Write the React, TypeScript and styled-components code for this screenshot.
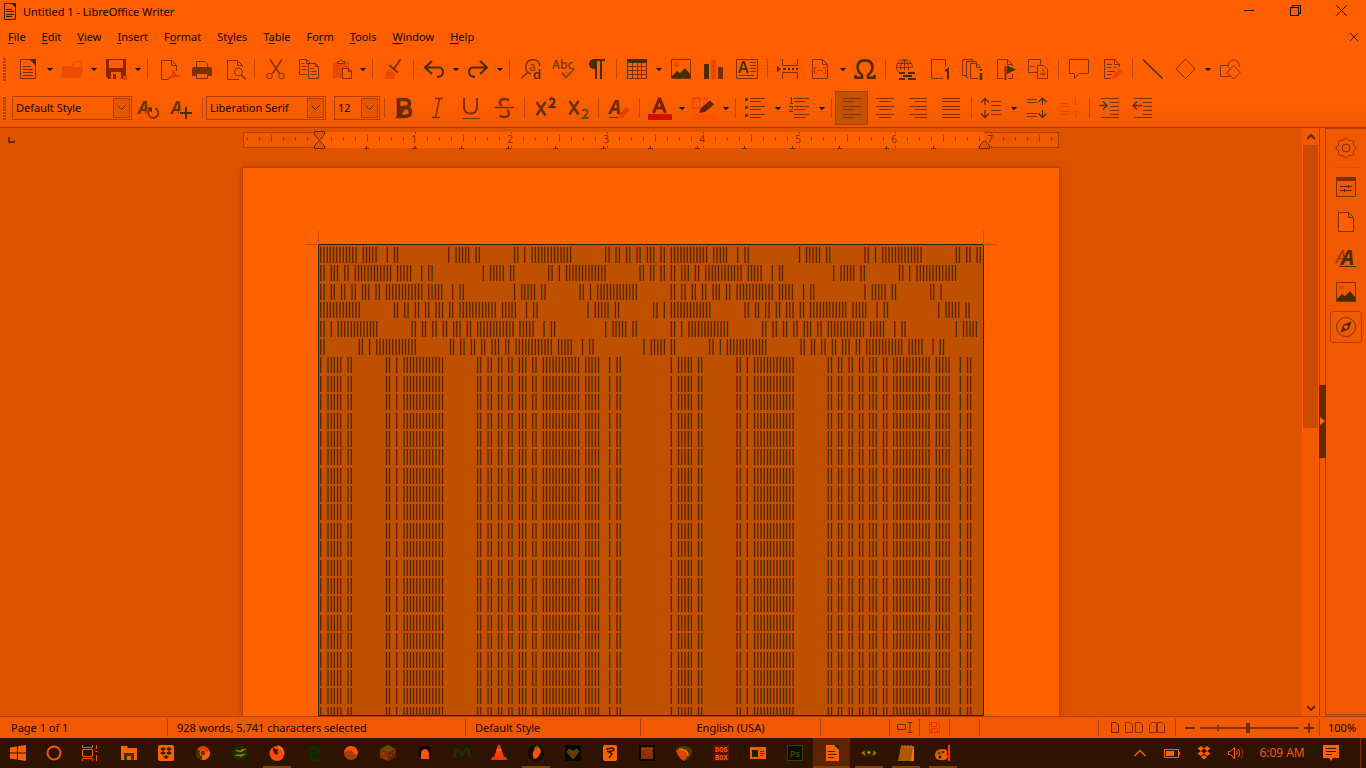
import React from "react";
import styled, { createGlobalStyle, css } from "styled-components";

const c = {
  page: "#ff6000",
  chrome: "#ff5f00",
  panel: "#f05900",
  desk: "#de5200",
  rule: "#ab4000",
  line: "#7b3200",
  dark: "#4a2c00",
  red: "#ea4700",
  task: "#2e1300",
};

const Global = createGlobalStyle`
  * { box-sizing: border-box; }
  body { margin: 0; background: ${c.task}; }
  button, select, input { font: inherit; color: inherit; margin: 0; padding: 0; border: 0; background: none; border-radius: 0; }
  button { cursor: pointer; }
  svg { display: block; flex: none; }
`;

const Shell = styled.div`
  display: flex;
  flex-direction: column;
  height: 100vh;
  overflow: hidden;
  color: #100600;
  font: 11px/16px "Noto Sans", "Open Sans", sans-serif;
`;

const Header = styled.header`
  flex: none;
  background: linear-gradient(${c.chrome} 75%, #f25a00);
  border-bottom: 1px solid ${c.rule};
`;

const TitleBar = styled.div`
  display: flex;
  align-items: center;
  height: 24px;
  padding-left: 3px;
  gap: 6px;
`;
const Title = styled.h1`
  margin: 0;
  flex: 1;
  font-size: 11px;
  font-weight: 400;
  line-height: 16px;
`;
const WindowButtons = styled.div`
  display: flex;
  align-self: flex-start;
  padding-right: 2px;
`;
const WindowButton = styled.button`
  width: 46px;
  height: 20px;
  display: grid;
  place-items: center;
`;

const MenuBar = styled.nav`
  display: flex;
  align-items: center;
  height: 26px;
`;
const MenuItem = styled.button`
  padding: 0 8px;
  line-height: 16px;
  u { text-underline-offset: 2px; }
`;
const CloseDoc = styled.button`
  margin-left: auto;
  width: 24px;
  height: 22px;
  display: grid;
  place-items: center;
`;

const Toolbar = styled.div<{ $second?: boolean }>`
  display: flex;
  align-items: center;
  height: ${(p) => (p.$second ? 39 : 38)}px;
  padding-top: ${(p) => (p.$second ? 1 : 0)}px;
  padding-left: 3px;
`;
const Grip = styled.div<{ $gap: number }>`
  flex: none;
  width: 3px;
  height: 23px;
  margin-right: ${(p) => p.$gap}px;
  background: repeating-linear-gradient(#a84200 0 2px, transparent 2px 3px);
`;
const Tool = styled.button<{ $on?: boolean }>`
  flex: none;
  width: 33px;
  height: 34px;
  padding: 0 4px 0 5px;
  display: flex;
  align-items: center;
  ${(p) =>
    p.$on &&
    css`
      background: #c45200;
      box-shadow: inset 0 0 0 1px #a04200;
    `}
`;
const Drop = styled.button`
  flex: none;
  width: 11px;
  height: 34px;
  display: grid;
  place-items: center;
  &::after {
    content: "";
    border: 3px solid transparent;
    border-top-color: #000;
    border-bottom: 0;
  }
`;
const Sep = styled.div`
  flex: none;
  width: 8px;
  height: 20px;
  background: linear-gradient(#bd4800, #bd4800) 4px 0 / 1px 100% no-repeat;
`;
const Combo = styled.label<{ $w: number; $gap?: number }>`
  flex: none;
  display: grid;
  width: ${(p) => p.$w}px;
  height: 24px;
  margin-right: ${(p) => p.$gap || 0}px;
  border: 1px solid ${c.rule};
  select {
    grid-area: 1 / 1;
    appearance: none;
    width: 100%;
    padding-left: 3px;
    outline: none;
  }
`;
const ComboArrow = styled.span`
  grid-area: 1 / 1;
  justify-self: end;
  align-self: center;
  width: 17px;
  height: 20px;
  margin-right: 1px;
  border: 1px solid ${c.rule};
  background: #e65500;
  display: grid;
  place-items: center;
  pointer-events: none;
`;

const Body = styled.main`
  flex: 1;
  min-height: 0;
  display: flex;
  background: ${c.desk};
`;
const Desk = styled.section`
  flex: 1;
  min-width: 0;
  display: flex;
  flex-direction: column;
  align-items: center;
  position: relative;
  overflow: hidden;
  padding-top: 3px;
`;
const TabKind = styled.button`
  position: absolute;
  left: 8px;
  top: 9px;
  width: 7px;
  height: 6px;
  border-left: 2px solid #6b2a00;
  border-bottom: 2px solid #6b2a00;
`;
const Page = styled.article`
  flex: 1;
  min-height: 0;
  display: flex;
  width: 818px;
  margin-top: 17px;
  padding: 76px 75px 0;
  background: ${c.page};
  border: 1px solid #b84500;
  border-bottom: 0;
  box-shadow: 0 0 5px #b04000;
`;
const TextArea = styled.div`
  position: relative;
  flex: 1;
  border: 1px solid #1c2c00;
  background: #be5000;
`;
const TextClip = styled.div`
  height: 100%;
  overflow: hidden;
`;
const BodyText = styled.p`
  margin: 0;
  color: #1c0800;
  font-family: "Liberation Serif", serif;
  font-size: 16px;
  line-height: 1.15;
  white-space: pre-wrap;
`;
const Crop = styled.i<{ $right?: boolean }>`
  position: absolute;
  top: -14px;
  width: 14px;
  height: 14px;
  border-bottom: 1px solid #c84b00;
  ${(p) =>
    p.$right
      ? css`
          right: -14px;
          border-left: 1px solid #c84b00;
        `
      : css`
          left: -14px;
          border-right: 1px solid #c84b00;
        `}
`;

const ScrollBar = styled.div`
  flex: none;
  width: 17px;
  display: flex;
  flex-direction: column;
  background: ${c.panel};
  border-left: 1px solid ${c.chrome};
  border-right: 1px solid ${c.chrome};
`;
const ScrollButton = styled.button`
  height: 17px;
  display: grid;
  place-items: center;
`;
const ScrollTrack = styled.div`
  flex: 1;
`;
const ScrollThumb = styled.div`
  height: 51%;
  background: #ca4a00;
`;
const Splitter = styled.div`
  flex: none;
  width: 7px;
  display: flex;
  align-items: center;
  padding-bottom: 2px;
  border: 1px solid ${c.rule};
  border-width: 0 1px;
  background: ${c.panel};
`;
const SplitHandle = styled.button`
  flex: none;
  width: 7px;
  height: 73px;
  margin-left: -1px;
  background: #682700;
  display: grid;
  place-items: center;
`;
const SideBar = styled.aside`
  flex: none;
  width: 40px;
  margin-bottom: 1px;
  padding-top: 3px;
  display: flex;
  flex-direction: column;
  align-items: center;
  background: ${c.panel};
  border: 1px solid ${c.rule};
  border-width: 1px 0;
`;
const SideButton = styled.button<{ $on?: boolean }>`
  width: 32px;
  height: 32px;
  margin-bottom: 3px;
  display: grid;
  place-items: center;
  border-radius: 3px;
  ${(p) => p.$on && css`border: 1px solid ${c.rule};`}
`;
const SideRule = styled.hr`
  width: 24px;
  height: 1px;
  margin: 0 0 3px;
  border: 0;
  background: #d95000;
`;

const StatusBar = styled.footer`
  flex: none;
  display: flex;
  align-items: center;
  height: 22px;
  background: ${c.panel};
  border-top: 1px solid ${c.rule};
`;
const Cell = styled.div<{ $w?: number; $pad?: number; $center?: boolean }>`
  flex: ${(p) => (p.$w ? "none" : 1)};
  width: ${(p) => (p.$w ? p.$w + "px" : "auto")};
  height: 17px;
  display: flex;
  align-items: center;
  gap: 4px;
  padding-left: ${(p) => p.$pad || 0}px;
  justify-content: ${(p) => (p.$center ? "center" : "flex-start")};
  border-right: 1px solid ${c.rule};
  white-space: nowrap;
  &:last-child { border-right: 0; }
`;
const ZoomSlider = styled.input`
  appearance: none;
  width: 99px;
  height: 16px;
  background:
    linear-gradient(#823400, #823400) 17px 50% / 2px 6px no-repeat,
    linear-gradient(#823400, #823400) 0 50% / 100% 2px no-repeat;
  &::-webkit-slider-thumb {
    appearance: none;
    width: 4px;
    height: 10px;
    background: #6b2a00;
  }
`;
const ZoomButton = styled.button`
  width: 12px;
  height: 16px;
  display: grid;
  place-items: center;
`;

const TaskBar = styled.nav`
  flex: none;
  display: flex;
  height: 30px;
  background: ${c.task};
  color: ${c.chrome};
`;
const TaskButton = styled.button<{ $w?: number; $open?: boolean; $active?: boolean }>`
  flex: none;
  width: ${(p) => p.$w || 37}px;
  height: 30px;
  display: grid;
  place-items: center;
  background:
    linear-gradient(#7e4000, #7e4000) 50% 100% / ${(p) => (p.$active ? 37 : p.$open ? 28 : 0)}px 2px no-repeat,
    ${(p) => (p.$active ? "#5c2400" : "transparent")};
`;
const TaskGap = styled.div`
  flex: none;
  width: 2px;
`;
const Tray = styled.div`
  margin-left: auto;
  display: flex;
  align-items: center;
  padding-right: 5px;
`;
const Clock = styled.time`
  width: 60px;
  text-align: center;
  font-size: 12px;
  font-family: "Open Sans", sans-serif;
  white-space: nowrap;
`;
const ShowDesktop = styled.button`
  width: 1px;
  height: 30px;
  margin-left: 10px;
  background: #7a3200;
`;

const Ico = ({ children, s = c.line, w = 1, crisp = false, size = 24 }: any) => (
  <svg
    width={size}
    height={size}
    viewBox={`0 0 ${size} ${size}`}
    fill="none"
    stroke={s}
    strokeWidth={w}
    shapeRendering={crisp ? "crispEdges" : "auto"}
    aria-hidden="true"
  >
    {children}
  </svg>
);

const Glyph = ({ x, y, size, children, fill = c.line, weight = 700, italic = false, family = "Open Sans" }: any) => (
  <text
    x={x}
    y={y}
    fontSize={size}
    fontFamily={`"${family}", sans-serif`}
    fontWeight={weight}
    fontStyle={italic ? "italic" : "normal"}
    fill={fill}
    stroke="none"
  >
    {children}
  </text>
);

const pageShape = (x: number) => `M${x}.5 2.5H${x + 10}.5L${x + 15}.5 7.5V21.5H${x}.5ZM${x + 10}.5 2.5V7.5H${x + 15}.5`;

const DocIcon = () => (
  <>
    <path d="M4.5 2.5H15L19.5 7V21.5H4.5Z" />
    <path d="M13 2H20V9Z" fill={c.dark} stroke="none" />
    <path d="M7 9.5H15M7 12.5H17M7 15.5H17M7 18.5H17" />
  </>
);
const PictureIcon = () => (
  <>
    <path d="M2.5 2.5H21.5V21.5H2.5Z" />
    <circle cx="7.5" cy="7.5" r="2.5" fill={c.red} stroke="none" />
    <path d="M3 21V19L8 14L11 16L16 11L21 17V21Z" fill={c.dark} stroke="none" />
  </>
);

const icons: Record<string, React.ReactNode> = {
  New: <Ico><DocIcon /></Ico>,
  Open: (
    <Ico s="#e04c00">
      <path d="M2.5 19V9.5H12L14.5 4.5H21.5V9" />
      <path d="M1 21L3 10H23L21 21Z" fill="#ea4c00" stroke="none" />
    </Ico>
  ),
  Save: (
    <Ico s="none" crisp>
      <path d="M2 2H22V22H4L2 20Z" fill="#8c2600" />
      <path d="M5 3H19V11H5Z" fill={c.chrome} />
      <path d="M7 15H17V22H7Z" fill={c.chrome} />
      <path d="M9 17H12V22H9Z" fill="#8c2600" />
      <circle cx="21" cy="21" r="2.5" fill="#f04000" />
    </Ico>
  ),
  "Export as PDF": (
    <Ico>
      <path d="M13 22.5H5.5V3.5H15.5L20.5 8.5V14M15.5 3.5V8.5H20.5" />
      <path d="M12 22C15 20 17.5 17 17.5 13.5C18 17 20 19.5 24 19.5C20 18.5 15.5 19.5 12 22Z" stroke="#e83000" strokeWidth="1.5" />
    </Ico>
  ),
  Print: (
    <Ico s="none">
      <path d="M3 12Q3 10 5 10H21Q23 10 23 12V19H19V16H7V19H3Z" fill={c.line} />
      <path d="M7.5 10V4.5H16L18.5 7V10" stroke={c.line} />
      <path d="M7.5 16.5H18.5V21.5H7.5Z" stroke={c.line} />
    </Ico>
  ),
  "Print Preview": (
    <Ico>
      <path d="M20.5 10V8.5L15.5 3.5H5.5V22.5H17M15.5 3.5V8.5H20.5" />
      <circle cx="16.5" cy="15" r="4" />
      <path d="M19.5 18L24 22.5" strokeWidth="1.5" />
    </Ico>
  ),
  Cut: (
    <Ico>
      <path d="M7 2.5L16.5 16.5M19 2.5L9.500 16.5" strokeWidth="1.5" />
      <circle cx="6.5" cy="19" r="2.800" />
      <circle cx="18.5" cy="19" r="2.800" />
    </Ico>
  ),
  Copy: (
    <Ico>
      <path d="M11 17.5H3.5V2.5H10.5L14.5 6.5M10.5 2.5V6.5H14.5" />
      <path d="M12.5 6.5H19.5L22.5 9.5V21.5H12.5ZM19.5 6.5V9.5H22.5M5.5 6.5H8.5M5.5 9.5H10.5M5.5 12.5H10.5M14.5 11.5H18M14.5 14.5H20.5M14.5 17.5H20.5" />
    </Ico>
  ),
  Paste: (
    <Ico>
      <path d="M4 5H20V21H4Z" fill={c.red} stroke="none" />
      <path d="M8.5 6.5V4.5H10.5Q12 1 13.5 4.5H15.5V6.5Z" stroke={c.line} fill={c.chrome} />
      <path d="M13.5 11.5H19.5L22.5 14.5V21.5H13.5ZM19.5 11.5V14.5H22.5" fill={c.chrome} />
    </Ico>
  ),
  "Clone Formatting": (
    <Ico>
      <path d="M4 22L5 15Q7 12.5 8.5 12.5L15 17L13 22Z" fill={c.red} stroke="none" />
      <path d="M8 8L17 15.5M19.5 2.5L13 11.5" strokeWidth="2" />
    </Ico>
  ),
  Undo: <Ico s={c.dark} w={2}><path d="M10 4L3 10.5L10 17M3 10.5H16.5Q21 10.5 21 15Q21 19.5 15 20" /></Ico>,
  Redo: <Ico s={c.dark} w={2}><path d="M14 4L21 10.5L14 17M21 10.5H7.5Q3 10.5 3 15Q3 19.5 9 20" /></Ico>,
  "Find and Replace": (
    <Ico w={1.5}>
      <path d="M3 21.5L9.500 15.500M13 17Q7.500 15.500 7.700 9.500Q8.500 2.800 15 2.500Q21.500 3 21.800 9" />
      <Glyph x={11} y={14} size={12} weight={400}>a</Glyph>
      <Glyph x={15} y={22} size={13} weight={600} fill={c.dark}>d</Glyph>
    </Ico>
  ),
  Spelling: (
    <Ico>
      <Glyph x={1} y={12} size={12} weight={600}>Abc</Glyph>
      <path d="M11 16L15 20.5L23.5 11.5" stroke="#8a4a00" strokeWidth="2" />
    </Ico>
  ),
  "Formatting Marks": (
    <Ico s="none" crisp>
      <path d="M11 12Q5 12 5 7Q5 2 11 2H21V4H18V22H16V4H13V22H11Z" fill={c.dark} />
    </Ico>
  ),
  "Insert Table": (
    <Ico crisp>
      <path d="M2 2H22V6H2Z" fill={c.dark} stroke="none" />
      <path d="M2.5 4V21.5H21.5V4M2 9.5H22M2 13.5H22M2 17.5H22M7.5 6V22M12.5 6V22M16.5 6V22" />
    </Ico>
  ),
  "Insert Image": <Ico><PictureIcon /></Ico>,
  "Insert Chart": (
    <Ico s="none" crisp>
      <path d="M2 7H7V22H2Z" fill={c.dark} />
      <path d="M9 3H14V22H9Z" fill={c.red} />
      <path d="M16 10H21V22H16Z" fill="#7a2e00" />
    </Ico>
  ),
  "Insert Text Box": (
    <Ico>
      <path d="M1.5 2.5H22.5V21.5H1.5ZM15 5.5H21M15 8.5H21M15 11.5H21M15 14.5H21M4 18.5H19" />
      <Glyph x={3} y={16} size={16} weight={600} fill={c.dark}>A</Glyph>
    </Ico>
  ),
  "Page Break": (
    <Ico>
      <path d="M6.5 2V8.5H21.5V2M6.5 22V15.5H21.5V22" />
      <path d="M1 9L5 12L1 15ZM7 11H10V13H7ZM12 11H14V13H12ZM16 11H18V13H16ZM20 11H22V13H20Z" fill={c.dark} stroke="none" />
    </Ico>
  ),
  "Insert Field": (
    <Ico>
      <path d={pageShape(3)} />
      <path d="M8 10.5H5.5V16.5H8M14 10.5H16.5V16.5H14M8 13.500H14" stroke="#d82800" />
    </Ico>
  ),
  "Special Character": (
    <Ico s={c.dark} w={2.5}>
      <path d="M2.500 18V20.800H9V18Q4.500 14.500 4.500 10Q4.800 3.500 12 3.300Q19.200 3.500 19.500 10Q19.500 14.500 15 18V20.800H21.500V18" />
    </Ico>
  ),
  Hyperlink: (
    <Ico>
      <path d="M2.500 10.500A8 8 0 0 1 18.500 10.500M2.500 10.500Q2.500 13 4.500 15M2.500 10.500H18.500M4 6.500H17M10.500 2.500V13M10.500 2.500Q6 6 6.500 13M10.500 2.500Q15 6 14.500 13" />
      <path d="M5 16H11M14 16H21M9 19H18M5 22H11M14 22H22" stroke={c.dark} strokeWidth="2" />
    </Ico>
  ),
  Footnote: (
    <Ico>
      <path d="M16 21.5H4.5V2.5H18.5V10" />
      <path d="M18 14L21 12V22.5" stroke={c.dark} strokeWidth="2" />
    </Ico>
  ),
  Endnote: (
    <Ico>
      <path d="M6 18.5H2.5V2.5H12.5V4M8 20.5H6.5V4.5H16.5V6M18 21.5H10.5V6.5H16.5L20.5 10V11M16.5 6.5V10.5H20" />
      <path d="M21 12V14M21 16V23" stroke={c.dark} strokeWidth="2.5" />
    </Ico>
  ),
  Bookmark: (
    <Ico>
      <path d="M10 21.5H4.5V2.5H14.5L19.5 7.5V9M14.5 2.5V7.5H19.5M15 21.5H19.5V17" />
      <path d="M12.5 9V23" strokeWidth="2" />
      <path d="M14 8.500L23 12.500L14 17Z" fill={c.dark} stroke="none" />
    </Ico>
  ),
  "Cross-reference": (
    <Ico>
      <path d="M11 15.5H2.5V2.5H14.5V8M11.5 21.5V8.5H17.5L21.5 12V21.5ZM17 12V18M14.5 16L17 18.5L19.5 16" />
      <path d="M4 9.5H9M14 17.5H15" stroke="#d02c00" />
    </Ico>
  ),
  Comment: <Ico><path d="M2.5 2.5H21.5V16.5H12L7.5 21.5V16.5H2.5Z" /></Ico>,
  "Track Changes": (
    <Ico>
      <path d="M11 21.5H4.5V2.5H14.5L19.5 7.5V10M14.5 2.5V7.5H19.5M7 7.500H12M7 10.5H11M7 14.500H15M7 17.5H12" />
      <path d="M13 10.5H17" stroke="#d02c00" />
      <path d="M12 22L13 18L20 11L23 14L16 21Z" fill={c.red} stroke="none" />
    </Ico>
  ),
  Line: <Ico s={c.dark} w={1.5}><path d="M2 2.5L21.5 21.5" /></Ico>,
  "Basic Shapes": <Ico><path d="M11.5 2L21 12L11.5 21.5L2 12Z" /></Ico>,
  "Draw Functions": (
    <Ico>
      <path d="M10 8.5H2.5V19.5H12" />
      <path d="M11 11A5.500 5.500 0 1 1 21 10" />
      <path d="M15.500 8.500L22 15.500L15.500 22L9 15.500Z" />
    </Ico>
  ),
  "Update Style": (
    <Ico>
      <Glyph x={1} y={18} size={17} italic fill="#6b3000">A</Glyph>
      <circle cx="16" cy="17" r="6.800" fill={c.chrome} stroke="none" />
      <path d="M18 12.300A5 5 0 1 1 13 13.200" strokeWidth="1.800" stroke={c.line} />
      <path d="M10 11.500H15V16.500Z" fill={c.dark} stroke="none" />
    </Ico>
  ),
  "New Style": (
    <Ico>
      <Glyph x={1} y={18} size={17} italic fill="#6b3000">A</Glyph>
      <path d="M16 10V24M9 17H23" stroke={c.chrome} strokeWidth="4" />
      <path d="M16 11V23M10 17H22" stroke={c.dark} strokeWidth="2" />
    </Ico>
  ),
  Bold: <Ico s="#6b2a00" w={3.500}><path d="M5.500 3.500H11Q16.500 3.500 16.500 7.500Q16.500 11.500 11 11.500H6.500M11 11.500Q17.500 11.500 17.500 16Q17.500 20.500 11 20.500H5.500ZM5.500 2V22" /></Ico>,
  Italic: <Ico w={1.500}><path d="M9 2.500H17M6 21.500H14M13.500 2.500L9.500 21.500" /></Ico>,
  Underline: <Ico s="#7b2e00" w={2}><path d="M5 2V11Q5 17.500 11.500 17.500Q18 17.500 18 11V2" /><path d="M3 22.500H21" strokeWidth="1" /></Ico>,
  Strikethrough: (
    <Ico s="#7b2e00">
      <path d="M17 4.500Q15.500 3 12.500 3Q8 3 8 6.500Q8 9 10 10M7.500 19.500Q9.500 21 12 21Q17 21 17 17.500Q17 15 15 14" strokeWidth="2.500" />
      <path d="M2.500 11.500H22" strokeWidth="1.500" />
    </Ico>
  ),
  Superscript: (
    <Ico s="#6b3000" w={2.5}>
      <path d="M3.5 6L12.5 19.5M12.5 6L3.5 19.5" />
      <path d="M16.5 4Q17.5 2.5 19 2.5Q21.5 2.5 21.5 5Q21.5 7 17 11H22.500" stroke={c.dark} strokeWidth="2" />
    </Ico>
  ),
  Subscript: (
    <Ico s="#6b3000" w={2.5}>
      <path d="M3.5 5L12.5 18.5M12.5 5L3.5 18.5" />
      <path d="M16.5 15Q17.5 13.5 19 13.5Q21.5 13.5 21.5 16Q21.5 18 17 22H22.500" stroke="#6b4a00" strokeWidth="2" />
    </Ico>
  ),
  "Clear Formatting": (
    <Ico>
      <Glyph x={2} y={18} size={19} italic fill="#6b2a00">A</Glyph>
      <path d="M2 21.5H11" />
      <path d="M11 20L19 11L23 14L15 23Z" fill="#f03c00" stroke="none" />
    </Ico>
  ),
  "Font Color": (
    <Ico>
      <path d="M5.5 17L11.2 3H11.8L17.5 17M8 12H15" stroke="#7b2000" strokeWidth="3" />
      <path d="M0 18H24V24H0Z" fill="#d41000" stroke="none" />
    </Ico>
  ),
  Highlighting: (
    <Ico>
      <path d="M0 1H16V13H0Z" fill="#f04c00" stroke="none" />
      <Glyph x={1} y={11} size={12} weight={600} fill="#ff6a10">ab</Glyph>
      <path d="M7 17L9 12L18 4.500L22 8.500L13 16Z" fill="#6b2200" stroke="none" />
      <path d="M0 18H24V24H0Z" fill="#ff5200" stroke="none" />
    </Ico>
  ),
  Bullets: (
    <Ico crisp>
      <path d="M6 2.5H21M6 5.5H17M6 10.5H21M6 13.5H17M6 18.5H21M6 21.5H17" />
      <path d="M1 2H4V5H1ZM1 10H4V13H1ZM1 18H4V21H1Z" fill="#554000" stroke="none" />
    </Ico>
  ),
  Numbering: (
    <Ico crisp>
      <path d="M6 2.5H21M6 5.5H17M6 10.5H21M6 13.5H17M6 18.5H21M6 21.5H17" />
      <path d="M2 3L3.5 2V8M1.5 7.5H5M1.5 11Q4.5 9 4.5 12L2 15.5H5" stroke="#5c3800" />
    </Ico>
  ),
  "Align Left": <Ico crisp><path d="M3 2.5H21M3 5.5H15M3 10.5H21M3 13.5H15M3 18.5H21M3 21.5H15" /></Ico>,
  "Align Center": <Ico crisp><path d="M3 2.5H21M6 5.5H18M3 10.5H21M6 13.5H18M3 18.5H21M6 21.5H18" /></Ico>,
  "Align Right": <Ico crisp><path d="M3 2.5H21M9 5.5H21M3 10.5H21M9 13.5H21M3 18.5H21M9 21.5H21" /></Ico>,
  Justified: <Ico crisp><path d="M3 2.5H21M3 5.5H21M3 10.5H21M3 13.5H21M3 18.5H21M3 21.5H21" /></Ico>,
  "Line Spacing": (
    <Ico>
      <path d="M5 2.5V9M1 6.5L5 2.5L9 6.5M5 14V21.5M1 17.5L5 21.5L9 17.5" stroke={c.dark} strokeWidth="1.2" />
      <path d="M11 5.5H21M11 9.5H21M11 14.5H21M11 18.5H21" />
    </Ico>
  ),
  "Increase Paragraph Spacing": (
    <Ico>
      <path d="M3 3.5H13M3 6.5H13M3 17.5H13M3 20.5H13" />
      <path d="M18.5 2V9M14.5 6L18.5 2L22.5 6M18.5 14V21.5M14.5 17.5L18.5 21.5L22.5 17.5" stroke={c.dark} strokeWidth="1.2" />
    </Ico>
  ),
  "Decrease Paragraph Spacing": (
    <Ico s="#d64e00">
      <path d="M3 7.5H12M3 10.5H12M3 15.5H12M3 18.5H12M18.5 2V9M14.5 5L18.5 9L22.5 5M18.5 14V21.5M14.5 18L18.5 14L22.5 18" />
    </Ico>
  ),
  "Increase Indent": (
    <Ico>
      <path d="M3 2.5H21M12 6.5H21M12 10.5H21M12 14.5H21M3 21.5H21M12 18.5H21" />
      <path d="M1 9.5H9M5 5.5L9 9.5L5 13.5" stroke="#6b3000" strokeWidth="1.5" />
    </Ico>
  ),
  "Decrease Indent": (
    <Ico>
      <path d="M3 2.5H21M12 6.5H21M12 10.5H21M12 14.5H21M3 21.5H21M12 18.5H21" />
      <path d="M2 9.5H11M6 5.5L2 9.5L6 13.5" stroke="#6b3000" strokeWidth="1.5" />
    </Ico>
  ),
};

/* "name" is a tool, "name>" a tool with a drop-down arrow, "|" a separator */
const standard = [
  "New>", "Open>", "Save>", "|", "Export as PDF", "Print", "Print Preview", "|", "Cut", "Copy", "Paste>", "|",
  "Clone Formatting", "|", "Undo>", "Redo>", "|", "Find and Replace", "Spelling", "Formatting Marks", "|",
  "Insert Table>", "Insert Image", "Insert Chart", "Insert Text Box", "|", "Page Break", "Insert Field>",
  "Special Character", "|", "Hyperlink", "Footnote", "Endnote", "Bookmark", "Cross-reference", "|", "Comment",
  "Track Changes", "|", "Line", "Basic Shapes>", "Draw Functions",
];
const formatting = [
  "|", "Bold", "Italic", "Underline", "Strikethrough", "|", "Superscript", "Subscript", "|", "Clear Formatting", "|",
  "Font Color>", "Highlighting>", "|", "Bullets>", "Numbering>", "|", "Align Left", "Align Center", "Align Right",
  "Justified", "|", "Line Spacing>", "Increase Paragraph Spacing", "Decrease Paragraph Spacing", "|",
  "Increase Indent", "Decrease Indent",
];

const Tools = ({ items }: { items: string[] }) => (
  <>
    {items.map((item, i) => {
      if (item === "|") return <Sep key={i} />;
      const name = item.replace(">", "");
      return (
        <React.Fragment key={i}>
          <Tool aria-label={name} $on={name === "Align Left"}>{icons[name]}</Tool>
          {item.endsWith(">") && <Drop aria-label={`${name} options`} />}
        </React.Fragment>
      );
    })}
  </>
);

const Select = ({ label, value, w, gap }: any) => (
  <Combo $w={w} $gap={gap}>
    <select aria-label={label} defaultValue={value}><option>{value}</option></select>
    <ComboArrow>
      <svg width="9" height="6" viewBox="0 0 9 6" fill="none" stroke="#5a2400"><path d="M.5 .5L4.5 4.5L8.5 .5" /></svg>
    </ComboArrow>
  </Combo>
);

/* each menu with the index of its access key */
const menus: [string, number][] = [
  ["File", 0], ["Edit", 0], ["View", 0], ["Insert", 0], ["Format", 1], ["Styles", 2],
  ["Table", 1], ["Form", 2], ["Tools", 0], ["Window", 0], ["Help", 0],
];

const inch = 96;
const Ruler = () => {
  const ticks = Array.from({ length: 68 }, (_, i) => i - 6);
  return (
    <svg width="816" height="19" viewBox="0 0 816 19" fill="none" shapeRendering="crispEdges" role="img" aria-label="Ruler">
      <rect x="0.5" y="1.5" width="815" height="15" fill={c.panel} stroke={c.rule} />
      <rect x="76" y="1" width="665" height="16" fill={c.page} />
      {ticks.map((k) => {
        const x = 76.5 + k * 12;
        if (k % 8 === 0) return k ? <path key={k} d={`M${x} 1V3M${x} 15V17`} stroke={c.rule} /> : null;
        return <path key={k} d={k % 4 === 0 ? `M${x} 4V11` : `M${x} 6V10`} stroke={c.rule} />;
      })}
      {[1, 2, 3, 4, 5, 6, 7].map((n) => (
        <text key={n} x={75 + n * inch} y="12" fontSize="10" textAnchor="middle" fill="#7a3000">{n}</text>
      ))}
      {Array.from({ length: 13 }, (_, i) => Math.round(76 + (i + 1) * 47.25)).map((x) => (
        <path key={x} d={`M${x - 2} 17.5H${x + 3}M${x}.5 15V18`} stroke="#6b2a00" />
      ))}
      <g stroke="#6b2a00" fill={c.desk} shapeRendering="auto">
        <path d="M71.5 .5H81.5V3.5L76.5 9.5L71.5 3.5ZM71.5 17.5H81.5V14.5L76.5 9.5L71.5 14.5Z" />
        <path d="M736.5 17.5H746.5V14.5L741.5 9.5L736.5 14.5Z" />
      </g>
    </svg>
  );
};

const bars = (n: number) => "|".repeat(n);
const gap = (n: number) => " ".repeat(n);
const headRun = [bars(12), bars(5) + " ", bars(1), bars(2)].join(" ");
const pairRun = [2, 2, 2, 2, 3, 2].map(bars).join(" ");
const tailRun = [1, 5, 2].map(bars).join(" ") + gap(8) + [2, 1, 13].map(bars).join(" ") + gap(8);
const documentText = headRun + gap(12) + (tailRun + pairRun + " " + headRun + gap(12)).repeat(56);

const gearPath =
  Array.from({ length: 96 }, (_, i) => {
    const a = (i / 96) * Math.PI * 2;
    const r = 9 + Math.max(-0.8, Math.cos(a * 8)) * 0.9;
    return `${i ? "L" : "M"}${(12 + r * Math.cos(a)).toFixed(2)} ${(12 + r * Math.sin(a)).toFixed(2)}`;
  }).join("") + "Z";

const sideIcons: [string, React.ReactNode][] = [
  ["Properties", <Ico crisp key="p"><path d="M2.5 2.5H21.5V21.5H2.5Z" /><path d="M2 2H22V6H2Z" fill="#7b2e00" stroke="none" /><path d="M6 11.5H18M6 15.5H18M14 10V13M10 14V17" stroke={c.dark} /></Ico>],
  ["Page", <Ico key="g"><path d={pageShape(4)} fill={c.chrome} /></Ico>],
  ["Styles", <Ico key="s"><Glyph x={2} y={18} size={18} italic weight={400} fill="#8a3a00">A</Glyph><Glyph x={7} y={20} size={21} italic fill={c.dark}>A</Glyph><path d="M5 21.5H22" stroke={c.dark} /></Ico>],
  ["Gallery", <Ico key="i"><PictureIcon /></Ico>],
  ["Navigator", <Ico key="n"><circle cx="12" cy="12" r="9.5" /><path d="M17.5 6.5L14.5 14.5L6.5 17.5L9.5 9.5Z" fill={c.dark} stroke="none" /><circle cx="12" cy="12" r="2" fill={c.chrome} stroke="none" /></Ico>],
];

const o = "#ff6000";
const T = ({ children }: any) => <Ico size={20} s="none">{children}</Ico>;
const apps: { name: string; open?: boolean; active?: boolean; icon: React.ReactNode }[] = [
  { name: "File Explorer", icon: <T><path d="M2 3H8L9 5H18V17H2Z" fill={o} /><path d="M5 17V10H15V17H12V13H8V17Z" fill="#4a3000" /></T> },
  { name: "Dropbox", icon: <T><rect x="2" y="2" width="16" height="16" rx="2" fill={o} /><path d="M7 4L10 6L7 8L4 6ZM13 4L16 6L13 8L10 6ZM7 8L10 10L7 12L4 10ZM13 8L16 10L13 12L10 10ZM10 12L13 14L10 16L7 14Z" fill="#3a2000" /></T> },
  { name: "Chrome", icon: <T><circle cx="10" cy="10" r="7" fill="#e03c00" /><path d="M10 10L4 6A7 7 0 0 0 9 17Z" fill="#3a3800" /><path d="M10 10L16.500 8A7 7 0 0 1 9 17Z" fill="#ff6400" /><circle cx="10" cy="10" r="3" fill="#8a3000" stroke={o} /></T> },
  { name: "OpenOffice", icon: <T><circle cx="10" cy="10" r="7.5" fill="#0e3400" /><path d="M5 8Q8 6 10 8Q12 5 17 6Q13 7 11 9.5Q8 8 5 8ZM4 13Q8 10 10 12Q13 10 16 11Q13 12 11 14Q8 12 4 13Z" fill="#e06000" /></T> },
  { name: "Firefox", open: true, icon: <T><circle cx="10" cy="10.5" r="7.5" fill="#ff4a00" /><path d="M11 2Q18 5 17 12Q15 6 11 7Z" fill="#ff7a00" /><path d="M6 4L9 6L12 6.500L10 9L12 10Q9 13 7 10Q5 7 6 4Z" fill="#4a1400" /></T> },
  { name: "Edge", icon: <T><path d="M3 9Q4 2.5 10.5 2.5Q17 3 17.5 11.5H7.5Q8 15 12 15Q15 15 16.5 14V17Q14 18.5 11 18.5Q4 18 4 11.5Q5 8 8 7Q7.5 8 7.5 9H13Q13 6 10 6Q6 6 3 9Z" fill="#0a3200" /></T> },
  { name: "Sphere", icon: <T><circle cx="10" cy="10" r="7" fill="#a04000" /><path d="M3 10Q8 5 12 9Q15 14 17 10A7 7 0 0 0 3 10Z" fill="#ff5400" /></T> },
  { name: "Minecraft", icon: <T><path d="M10 2L18 6L10 10L2 6Z" fill="#6b4a00" /><path d="M2 6L10 10V18L2 14.5Z" fill="#8a3000" /><path d="M18 6L10 10V18L18 14.5Z" fill="#642200" /><path d="M4 10L6 11M7 14L9 15M12 13L14 12M15 10L17 9" stroke="#b04c00" /></T> },
  { name: "Headphones", icon: <T><path d="M4 14Q2 3 10 3Q18 3 16 14Z" fill="#0c0400" /><path d="M6 16V10Q7 6 10 6Q13 6 14 10V16Z" fill="#ff4a20" /><path d="M8 9H12V12H8Z" fill={o} /></T> },
  { name: "Malwarebytes", icon: <T><path d="M3 15Q2 5 6 7Q9 9 10 13Q11 9 14 6Q18 5 17 14" stroke="#1e3000" strokeWidth="3" /></T> },
  { name: "VLC", icon: <T><path d="M9 2H11L15 14H5Z" fill="#f04000" /><path d="M8 6H12L12.500 8H7.500Z" fill="#ff6a10" /><path d="M3 14H17L18 17H2Z" fill="#f03400" /></T> },
  { name: "FL Studio", open: true, icon: <T><circle cx="10" cy="10" r="8" fill="#120800" /><path d="M13 4Q17 8 12 14Q8 18 7 14Q5 7 13 4Z" fill="#ff5200" /><path d="M12 3L8 6" stroke="#607000" strokeWidth="2" /></T> },
  { name: "Heart", icon: <T><rect x="2" y="2" width="16" height="16" fill="#080800" /><path d="M10 16L4 9L6 6L10 8L14 6L16 9Z" fill="#6b3800" stroke="#4a6400" strokeDasharray="2 1" /></T> },
  { name: "Sketch", icon: <T><rect x="3" y="2" width="14" height="16" rx="2" fill={o} /><path d="M6 6L13 5L14 7L9 9L12 11L9 15M7 8L9 9" stroke="#3a1400" strokeWidth="1.5" /></T> },
  { name: "Frame", icon: <T><rect x="2" y="2" width="16" height="16" fill="#0a0400" /><rect x="4" y="4" width="12" height="12" fill="#8a3000" /><path d="M4 6H16M8 9H14" stroke="#b04000" /></T> },
  { name: "Shell", icon: <T><path d="M2 8Q3 3 9 3Q17 3 18 8Q17 16 10 18Q10 11 2 8Z" fill="#4a3c00" /><path d="M2 7Q10 5 14 9Q13 15 10 18Q3 14 2 7Z" fill="#e04400" /><path d="M5 6Q14 6 14 13" stroke="#ff7000" strokeWidth="1.5" /></T> },
  { name: "DOSBox", icon: <T><rect x="2" y="2" width="16" height="16" fill="#5c1000" /><Glyph x={4} y={9} size={7} fill={o} family="Liberation Mono">DOS</Glyph><Glyph x={4} y={17} size={7} fill={o} family="Liberation Mono">BOX</Glyph></T> },
  { name: "Reader", icon: <T><rect x="2" y="4" width="16" height="12" fill="#ff5800" /><rect x="4" y="7" width="6" height="7" fill="#122400" /><path d="M12 8.5H16M12 10.5H16M12 12.5H15" stroke="#6b2a00" /></T> },
  { name: "Photoshop", icon: <T><rect x="2.5" y="2.5" width="15" height="15" fill="#0e0c00" stroke="#3a3c00" /><Glyph x={5} y={14} size={9} weight={600} fill="#465000">Ps</Glyph></T> },
  { name: "LibreOffice Writer", active: true, icon: <T><path d="M4 2H13L17 6V18H4Z" fill={o} /><path d="M12 2H17V7Z" fill="#1c2800" /><path d="M6 8.5H13M6 11.5H15M6 14.5H12" stroke="#4a1c00" /></T> },
  { name: "Eye", open: true, icon: <T><path d="M2 10Q10 2 18 10Q10 18 2 10Z" fill={o} stroke="#1c3000" /><circle cx="10" cy="9.500" r="4.500" fill="#0e3000" /><circle cx="10" cy="9.500" r="1.500" fill="#ff6a20" /></T> },
  { name: "Notepad", open: true, icon: <T><path d="M5 3H18L16 18H2Z" fill="#b05800" /><path d="M17 4L18 4V18H15Z" fill="#ff7000" /><path d="M6 2V5M9 2V5M12 2V5M15 2V5" stroke="#e07000" /></T> },
  { name: "Paint", open: true, icon: <T><path d="M2 12Q2 6 10 6Q15 6 14 10Q13 12 15 13Q14 18 8 17Q2 17 2 12Z" fill="#f05c00" /><circle cx="6" cy="10" r="1.5" fill="#2a5000" /><circle cx="10" cy="9" r="1.5" fill="#8a1400" /><circle cx="7" cy="14" r="1.5" fill="#2a1400" /><path d="M16 2V18" stroke="#ff3400" strokeWidth="2" /></T> },
];

export default function App() {
  return (
    <Shell>
      <Global />
      <Header>
        <TitleBar>
          <svg width="14" height="18" viewBox="0 0 14 18" fill="none" stroke="#2a2000">
            <path d="M1.5 .5H9L12.5 4V16.500H1.5Z" />
            <path d="M8 0H13V5Z" fill="#2a2000" stroke="none" />
            <path d="M3 6.5H9M3 8.5H11M3 11.5H11M3 13.5H9" />
          </svg>
          <Title>Untitled 1 - LibreOffice Writer</Title>
          <WindowButtons>
            <WindowButton aria-label="Minimize"><svg width="11" height="11" stroke="#000"><path d="M0 5.5H10" /></svg></WindowButton>
            <WindowButton aria-label="Restore"><svg width="11" height="11" stroke="#000" fill="none"><path d="M.5 2.5H8.5V10.5H.5ZM2.5 2V.5H10.5V8.5H9" /></svg></WindowButton>
            <WindowButton aria-label="Close"><svg width="11" height="11" stroke="#000"><path d="M.5 .5L10.5 10.5M10.5 .5L.5 10.5" /></svg></WindowButton>
          </WindowButtons>
        </TitleBar>
        <MenuBar aria-label="Menu">
          {menus.map(([name, k]) => (
            <MenuItem key={name}>{name.slice(0, k)}<u>{name[k]}</u>{name.slice(k + 1)}</MenuItem>
          ))}
          <CloseDoc aria-label="Close Document"><svg width="8" height="8" stroke="#4a1c00"><path d="M0 0L8 8M8 0L0 8" /></svg></CloseDoc>
        </MenuBar>
        <Toolbar role="toolbar" aria-label="Standard">
          <Grip $gap={5} />
          <Tools items={standard} />
        </Toolbar>
        <Toolbar $second role="toolbar" aria-label="Formatting">
          <Grip $gap={6} />
          <Select label="Paragraph Style" value="Default Style" w={120} />
          <Tools items={["Update Style", "New Style", "|"]} />
          <Select label="Font Name" value="Liberation Serif" w={120} gap={8} />
          <Select label="Font Size" value="12" w={46} />
          <Tools items={formatting} />
        </Toolbar>
      </Header>

      <Body>
        <Desk>
          <TabKind aria-label="Tab type" />
          <Ruler />
          <Page>
            <TextArea>
              <Crop />
              <Crop $right />
              <TextClip><BodyText>{documentText}</BodyText></TextClip>
            </TextArea>
          </Page>
        </Desk>
        <ScrollBar>
          <ScrollButton aria-label="Scroll up"><svg width="8" height="6" fill="none" stroke="#6b2400" strokeWidth="2"><path d="M0 5L4 1L8 5" /></svg></ScrollButton>
          <ScrollTrack><ScrollThumb /></ScrollTrack>
          <ScrollButton aria-label="Scroll down"><svg width="8" height="6" fill="none" stroke="#6b2400" strokeWidth="2"><path d="M0 1L4 5L8 1" /></svg></ScrollButton>
        </ScrollBar>
        <Splitter>
          <SplitHandle aria-label="Hide sidebar"><svg width="5" height="8"><path d="M0 0L5 4L0 8Z" fill="#ff6a10" /></svg></SplitHandle>
        </Splitter>
        <SideBar>
          <SideButton aria-label="Sidebar Settings"><Ico><path d={gearPath} /><circle cx="12" cy="12" r="4" /></Ico></SideButton>
          <SideRule />
          {sideIcons.map(([name, icon]) => (
            <SideButton key={name} aria-label={name} $on={name === "Navigator"}>{icon}</SideButton>
          ))}
        </SideBar>
      </Body>

      <StatusBar>
        <Cell $w={168} $pad={11}>Page 1 of 1</Cell>
        <Cell $w={298} $pad={9}>928 words, 5,741 characters selected</Cell>
        <Cell $w={175} $pad={9}>Default Style</Cell>
        <Cell $w={180} $center>English (USA)</Cell>
        <Cell $w={69} />
        <Cell $w={30} $center>
          <svg width="16" height="11" fill="none" stroke="#6b2a00"><path d="M.5 2.5H8.5V7.5H.5ZM10.5 .5H15.5M10.5 10.5H15.5M13 .5V10.5" /></svg>
        </Cell>
        <Cell $w={30} $center>
          <svg width="11" height="11" fill="none" stroke="#f02c00"><path d="M.5 .5H8.5L10.5 2.5V10.5H.5ZM2.5 .5V4.5H7.5V.5M2.5 10.5V6.5H8.5V10.5" /></svg>
        </Cell>
        <Cell $w={30} />
        <Cell />
        <Cell $w={77} $pad={12}>
          <svg width="56" height="11" fill="none" stroke={c.line}>
            <path d="M.5 .5H5L7.5 3V10.5H.5Z" stroke="#5c2400" />
            <path d="M14.5 .5H19L21.5 3V10.5H14.5ZM24.5 .5H29L31.5 3V10.5H24.5ZM38.5 10.5V3L41 .5H45.5V10.5ZM46.5 .5H51L53.5 3V10.5H46.5Z" />
          </svg>
        </Cell>
        <Cell $w={144} $pad={8}>
          <ZoomButton aria-label="Zoom out"><svg width="10" height="10"><path d="M0 5H10" stroke="#6b2a00" strokeWidth="2" /></svg></ZoomButton>
          <ZoomSlider type="range" aria-label="Zoom" defaultValue={48} />
          <ZoomButton aria-label="Zoom in"><svg width="10" height="10"><path d="M0 5H10M5 0V10" stroke="#6b2a00" strokeWidth="2" /></svg></ZoomButton>
        </Cell>
        <Cell $w={46} $pad={8}>100%</Cell>
      </StatusBar>

      <TaskBar aria-label="Taskbar">
        <TaskButton $w={36} aria-label="Start"><T><path d="M2 4.5L9 3.5V9.5H2ZM10 3.3L18 2V9.5H10ZM2 10.5H9V16.5L2 15.5ZM10 10.5H18V18L10 16.7Z" fill={o} /></T></TaskButton>
        <TaskButton $w={36} aria-label="Cortana"><T><circle cx="10" cy="10" r="6.500" stroke="#f05a00" strokeWidth="2" /></T></TaskButton>
        <TaskButton $w={36} aria-label="Task View"><T><path d="M2.5 2V4.5H12.5V2M2.5 18V15.5H12.5V18M2.5 6.5H12.5V13.5H2.5ZM16.5 2V6M16.5 12V18M15.5 8.5H17.5" stroke="#f05a00" /></T></TaskButton>
        <TaskGap />
        {apps.map((a) => (
          <TaskButton key={a.name} aria-label={a.name} $open={a.open} $active={a.active}>{a.icon}</TaskButton>
        ))}
        <Tray>
          <TaskButton $w={32} aria-label="Show hidden icons"><T><path d="M4.500 13L10 7.500L15.500 13" stroke={o} strokeWidth="1.300" /></T></TaskButton>
          <TaskButton $w={32} aria-label="Battery"><T><path d="M2.5 6.5H16.5V14.5H2.5ZM17.5 9V12" stroke={o} /><path d="M4 8H12V13H4Z" fill={o} /></T></TaskButton>
          <TaskButton $w={32} aria-label="Dropbox status"><T><path d="M7 3L10 5.5L7 8L3.5 5.5ZM13 3L16.5 5.5L13 8L10 5.5ZM7 8L10 10.5L7 13L3.5 10.5ZM13 8L16.5 10.5L13 13L10 10.5ZM10 12L13 14L10 16.5L7 14Z" fill={o} /></T></TaskButton>
          <TaskButton $w={32} aria-label="Volume"><T><path d="M2.5 8.5H4.5L8.5 4.5V15.5L4.5 11.5H2.5ZM10.5 8Q12 10 10.5 12M12.5 6Q15 10 12.5 14" stroke={o} /><path d="M15 4.5Q18.5 10 15 15.5" stroke="#8a3600" /></T></TaskButton>
          <Clock>6:09 AM</Clock>
          <TaskButton $w={38} aria-label="Notifications"><T><path d="M2 2H18V15H12L10 18L8 15H2Z" fill={o} /><path d="M5 5.5H15M5 8.5H15M5 11.5H11" stroke={c.task} /></T></TaskButton>
          <ShowDesktop aria-label="Show desktop" />
        </Tray>
      </TaskBar>
    </Shell>
  );
}
